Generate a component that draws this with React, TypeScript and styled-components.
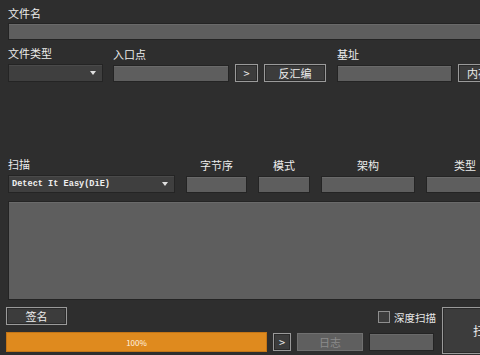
import React from "react";
import styled, { createGlobalStyle } from "styled-components";

const GlobalStyle = createGlobalStyle`
  html, body {
    margin: 0;
    padding: 0;
    background: #2e2e2e;
  }
  body {
    font-family: "Noto Sans CJK SC", "Noto Sans", sans-serif;
  }
`;

const Window = styled.div`
  width: 480px;
  height: 355px;
  overflow: hidden;
  background: #2e2e2e;
  color: #e6e6e6;
  font-size: 11px;
`;

const Content = styled.div`
  width: 540px;
  padding: 6px 0 0 8px;
  box-sizing: border-box;
`;

const Label = styled.div<{ $center?: boolean }>`
  height: 14px;
  line-height: 14px;
  font-size: 11px;
  color: #ececec;
  white-space: nowrap;
  text-align: ${(p) => (p.$center ? "center" : "left")};
`;

const Field = styled.div<{ $w?: number; $h?: number }>`
  width: ${(p) => (p.$w ? `${p.$w}px` : "auto")};
  height: ${(p) => p.$h ?? 17}px;
  box-sizing: border-box;
  background: #5e5e5e;
  border: 1px solid #242424;
  box-shadow: inset 0 1px 0 #6a6a6a;
  flex-shrink: 0;
`;

const Combo = styled(Field)`
  display: flex;
  align-items: center;
  justify-content: space-between;
  padding: 0 6px 0 3px;
  background: #3f3f3f;
  box-shadow: inset 0 1px 0 #4a4a4a;
`;

const ComboText = styled.span`
  font-family: "Liberation Mono", monospace;
  font-size: 8.6px;
  font-weight: bold;
  color: #f0f0f0;
`;

const Arrow = styled.span`
  width: 0;
  height: 0;
  border-left: 3px solid transparent;
  border-right: 3px solid transparent;
  border-top: 4px solid #e0e0e0;
`;

const Button = styled.div<{ $w: number; $h?: number; $disabled?: boolean }>`
  width: ${(p) => p.$w}px;
  height: ${(p) => p.$h ?? 18}px;
  box-sizing: border-box;
  flex-shrink: 0;
  display: flex;
  align-items: center;
  justify-content: center;
  font-size: 11px;
  white-space: nowrap;
  overflow: hidden;
  background: ${(p) => (p.$disabled ? "#5f5f5f" : "#3c3c3c")};
  border: 1px solid ${(p) => (p.$disabled ? "#707070" : "#9a9a9a")};
  box-shadow: ${(p) => (p.$disabled ? "none" : "inset 0 0 0 1px #2a2a2a")};
  color: ${(p) => (p.$disabled ? "#8c8c8c" : "#ececec")};
`;

const Row = styled.div<{ $gap?: number }>`
  display: flex;
  align-items: flex-end;
  gap: ${(p) => p.$gap ?? 6}px;
`;

const Col = styled.div`
  display: flex;
  flex-direction: column;
  gap: 4px;
  flex-shrink: 0;
`;

const FileRow = styled(Col)`
  gap: 3px;
`;

const TypeRow = styled(Row)`
  margin-top: 6px;
`;

const ScanRow = styled(Row)`
  margin-top: 75px;
  gap: 11px;
`;

const Output = styled(Field)`
  margin-top: 8px;
  height: 99px;
`;

const Bottom = styled.div`
  display: flex;
  gap: 6px;
  margin: 7px 0 0 -2px;
`;

const BottomLeft = styled.div`
  display: flex;
  flex-direction: column;
  gap: 7px;
  width: 430px;
`;

const TopLine = styled.div`
  display: flex;
  align-items: center;
  justify-content: space-between;
`;

const Check = styled.label`
  display: flex;
  align-items: center;
  gap: 4px;
  font-size: 10.5px;
  color: #e6e6e6;
  margin-top: 2px;
`;

const Box = styled.span`
  width: 12px;
  height: 12px;
  box-sizing: border-box;
  background: #3c3c3c;
  border: 1px solid #8e8e8e;
`;

const Progress = styled.div`
  width: 261px;
  height: 20px;
  box-sizing: border-box;
  background: #df8a1e;
  border: 1px solid #c47516;
  display: flex;
  align-items: center;
  justify-content: center;
  font-size: 8px;
  color: #fff3e0;
  flex-shrink: 0;
`;

const BigButton = styled(Button)`
  height: 47px;
  font-size: 12px;
  justify-content: flex-start;
  padding-left: 30px;
`;

const BottomLine = styled.div`
  display: flex;
  align-items: center;
  gap: 6px;
`;

export default function App() {
  return (
    <>
      <GlobalStyle />
      <Window>
        <Content>
          <FileRow>
            <Label>文件名</Label>
            <Field $w={540} />
          </FileRow>

          <TypeRow>
            <Col>
              <Label>文件类型</Label>
              <Combo $w={95} $h={18}>
                <span />
                <Arrow />
              </Combo>
            </Col>
            <Col style={{ marginLeft: 4 }}>
              <Label>入口点</Label>
              <Field $w={116} />
            </Col>
            <Button $w={23}>&gt;</Button>
            <Button $w={62}>反汇编</Button>
            <Col style={{ marginLeft: 5 }}>
              <Label>基址</Label>
              <Field $w={115} />
            </Col>
            <Button $w={62}>内存映射</Button>
          </TypeRow>

          <ScanRow>
            <Col>
              <Label>扫描</Label>
              <Combo $w={167} $h={18}>
                <ComboText>Detect It Easy(DiE)</ComboText>
                <Arrow />
              </Combo>
            </Col>
            <Col>
              <Label $center>字节序</Label>
              <Field $w={61} />
            </Col>
            <Col>
              <Label $center>模式</Label>
              <Field $w={52} />
            </Col>
            <Col>
              <Label $center>架构</Label>
              <Field $w={94} />
            </Col>
            <Col>
              <Label $center>类型</Label>
              <Field $w={78} />
            </Col>
          </ScanRow>

          <Output $w={540} />

          <Bottom>
            <BottomLeft>
              <TopLine>
                <Button $w={61}>签名</Button>
                <Check>
                  <Box />
                  深度扫描
                </Check>
              </TopLine>
              <BottomLine>
                <Progress>100%</Progress>
                <Button $w={18}>&gt;</Button>
                <Button $w={66} $disabled>日志</Button>
                <Field $w={65} $h={18} />
              </BottomLine>
            </BottomLeft>
            <BigButton $w={80}>扫描</BigButton>
          </Bottom>
        </Content>
      </Window>
    </>
  );
}
